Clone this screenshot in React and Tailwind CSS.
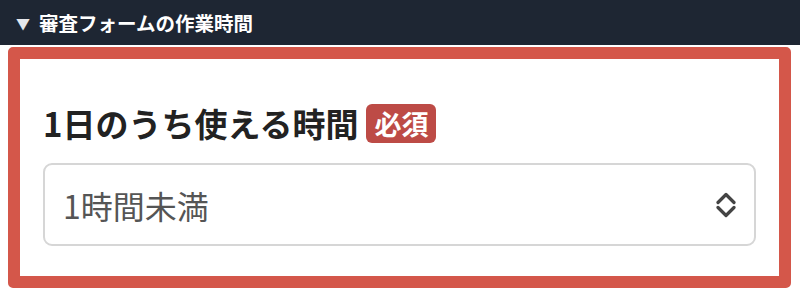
export default function App() {
  const font = { fontFamily: '"Noto Sans CJK JP", "Noto Sans", sans-serif' };
  return (
    <div className="w-[800px] h-[292px] bg-white overflow-hidden" style={font}>
      <div className="h-[45px] bg-[#1e2633] flex items-center pl-[16px] text-white font-bold text-[19.5px] leading-none">
        <span className="text-[14px] text-[#e5e7eb] mr-[9px]">▼</span>
        <span>審査フォームの作業時間</span>
      </div>
      <div className="mt-[2px] ml-[8px] mr-[9px] h-[241px] border-[12px] border-[#d4574a] rounded-[5px] bg-white px-[23px] pt-[45px]">
        <div className="flex items-center h-[39px]">
          <span className="text-[33px] font-bold text-[#222] leading-none">1日のうち使える時間</span>
          <span className="ml-[8px] h-[39px] px-[8px] flex items-center rounded-[6px] bg-[#bd4b46] text-white text-[27px] font-bold leading-none">必須</span>
        </div>
        <div className="mt-[20px] h-[83px] border-2 border-[#d6d6d6] rounded-[9px] flex items-center justify-between pl-[18px] pr-[18px]">
          <span className="text-[32px] text-[#555] leading-none">1時間未満</span>
          <svg width="20" height="28" viewBox="0 0 20 28" fill="none" stroke="#444" strokeWidth="3.2" strokeLinecap="round" strokeLinejoin="round">
            <path d="M2 11.5 L10 3.5 L18 11.5" />
            <path d="M2 16.5 L10 24.5 L18 16.5" />
          </svg>
        </div>
      </div>
    </div>
  );
}
